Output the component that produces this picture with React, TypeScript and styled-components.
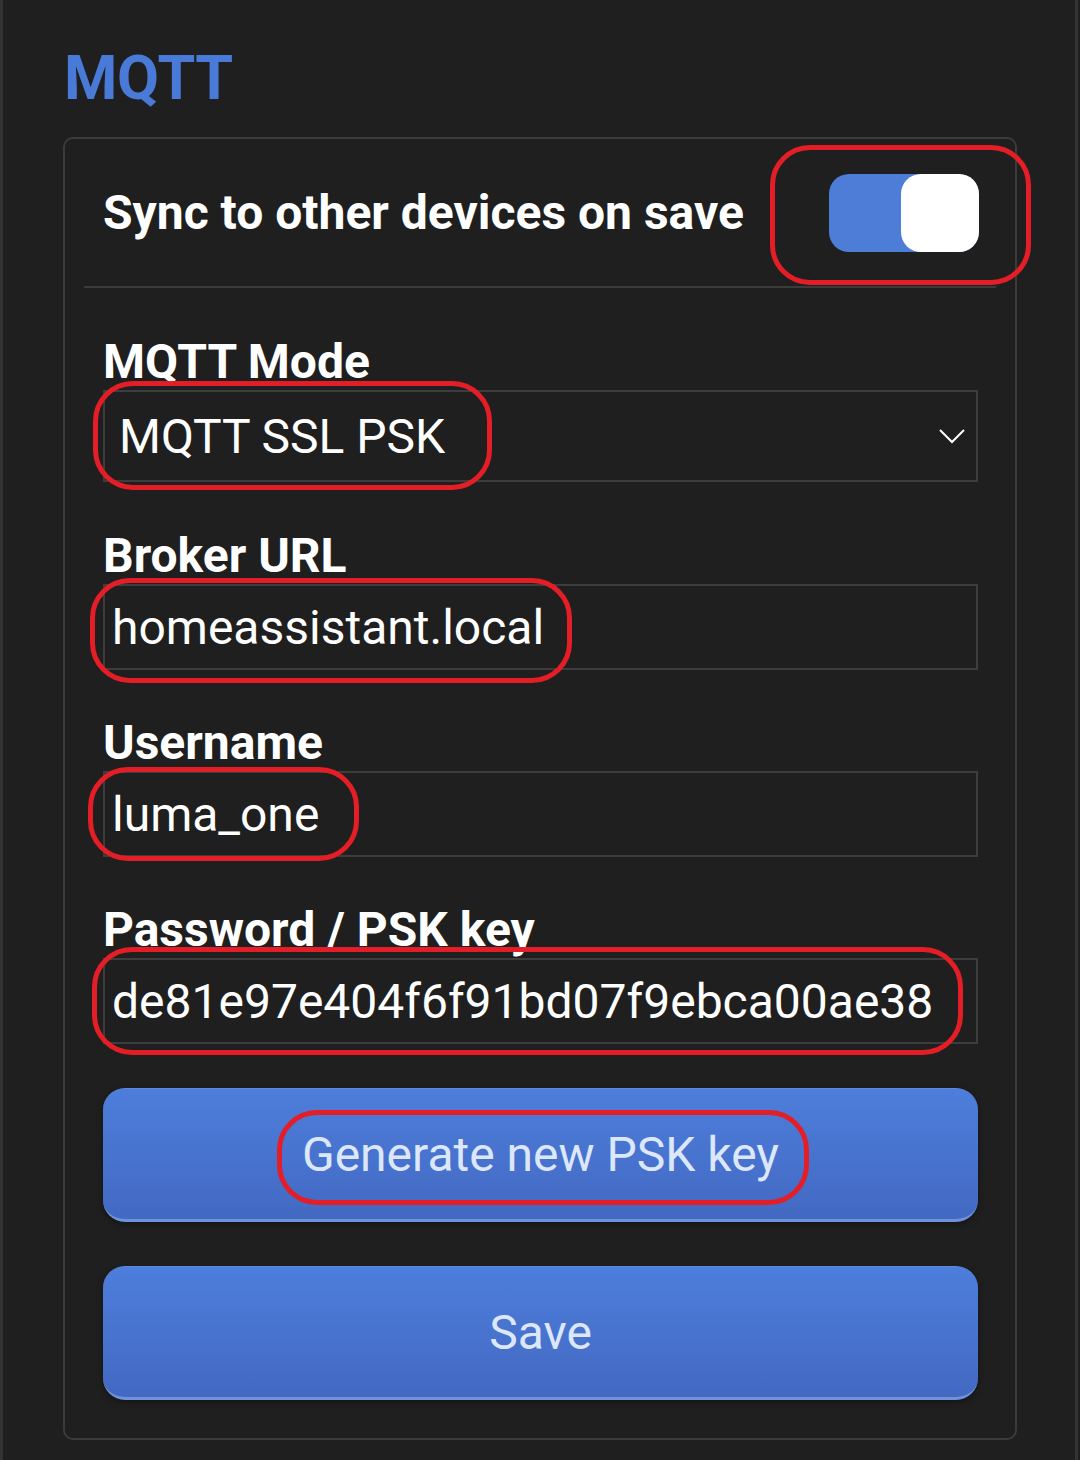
import { createGlobalStyle } from "styled-components";
import styled from "styled-components";

const GlobalStyle = createGlobalStyle`
    html, body {
        margin: 0;
        padding: 0;
        background-color: #1f1f1f;
    }

    body {
        font-family: Roboto, "Liberation Sans", sans-serif;
        color: #ffffff;
    }

    * {
        box-sizing: border-box;
    }
`

const Page = styled.div`
    position: relative;
    width: 1078px;
    min-height: 1460px;
    padding: 40px 58px 20px 60px;
    border-left: 3px solid #333333;
    border-right: 3px solid #333333;
    background-color: #1f1f1f;
`

const Heading = styled.h1`
    margin: 0 0 0 1px;
    font-size: 61px;
    line-height: 76px;
    font-weight: 700;
    color: #4a7ad8;
    letter-spacing: -0.5px;
`

const Card = styled.div`
    margin-top: 21px;
    border: 2px solid #3b3b3b;
    border-radius: 10px;
    padding-bottom: 38px;
`

const SyncRow = styled.div`
    display: flex;
    align-items: center;
    justify-content: space-between;
    height: 149px;
    margin: 0 19px;
    padding: 0 17px 0 19px;
    border-bottom: 2px solid #3b3b3b;
`

const SyncLabel = styled.span`
    font-size: 48px;
    font-weight: 700;
`

const Toggle = styled.div<{ $on: boolean }>`
    display: flex;
    justify-content: ${p => p.$on ? 'flex-end' : 'flex-start'};
    width: 150px;
    height: 78px;
    border-radius: 20px;
    background-color: ${p => p.$on ? '#4e7dd8' : '#555555'};

    div {
        width: 78px;
        height: 78px;
        border-radius: 20px;
        background-color: #ffffff;
    }
`

const Form = styled.div`
    display: flex;
    flex-direction: column;
    padding: 49px 37px 0 38px;
`

const Field = styled.div`
    display: flex;
    flex-direction: column;
    margin-bottom: 48px;

    &:first-child {
        margin-bottom: 49px;
    }

    &:nth-last-of-type(1) {
        margin-bottom: 44px;
    }
`

const Label = styled.label`
    font-size: 48px;
    font-weight: 700;
    line-height: 50px;
    margin-bottom: 3px;
`

const Box = styled.div<{ $tall?: boolean }>`
    display: flex;
    align-items: center;
    justify-content: space-between;
    height: ${p => p.$tall ? '92px' : '86px'};
    padding: 0 10px 0 ${p => p.$tall ? '14px' : '7px'};
    border: 2px solid #3d3d3d;
    font-size: 48px;
    color: #ffffff;
    white-space: nowrap;
    overflow: hidden;
`

const Chevron = styled.svg`
    width: 28px;
    height: 16px;
`

const Button = styled.button`
    display: flex;
    align-items: center;
    justify-content: center;
    width: 100%;
    height: 134px;
    margin-bottom: 44px;
    border: none;
    border-top: 1px solid #5c88de;
    border-bottom: 3px solid #6e92dc;
    border-radius: 22px;
    background: linear-gradient(#4d7edb, #4369c2);
    box-shadow: 0 2px 6px rgba(0, 0, 0, 0.4);
    font-family: Roboto, "Liberation Sans", sans-serif;
    font-size: 48px;
    color: #dde7fb;

    &:last-child {
        margin-bottom: 0;
    }
`

// red annotation marks drawn over the screenshot
const Mark = styled.div<{ $x: number, $y: number, $w: number, $h: number }>`
    position: absolute;
    left: ${p => p.$x - 3}px;
    top: ${p => p.$y}px;
    width: ${p => p.$w}px;
    height: ${p => p.$h}px;
    border: 5px solid #e41e26;
    border-radius: 40px;
    pointer-events: none;
`

const marks = [
    { x: 770, y: 145, w: 261, h: 140 },
    { x: 93, y: 381, w: 399, h: 109 },
    { x: 90, y: 578, w: 482, h: 105 },
    { x: 88, y: 767, w: 271, h: 94 },
    { x: 92, y: 947, w: 871, h: 108 },
    { x: 277, y: 1110, w: 532, h: 95 },
]

const App = () => {
    return (
        <>
            <GlobalStyle />
            <Page>
                <Heading>MQTT</Heading>
                <Card>
                    <SyncRow>
                        <SyncLabel>Sync to other devices on save</SyncLabel>
                        <Toggle $on={true}><div /></Toggle>
                    </SyncRow>
                    <Form>
                        <Field>
                            <Label>MQTT Mode</Label>
                            <Box $tall>
                                <span>MQTT SSL PSK</span>
                                <Chevron viewBox="0 0 28 16">
                                    <path d="M2 2 L14 14 L26 2" fill="none" stroke="#ffffff" strokeWidth="2" />
                                </Chevron>
                            </Box>
                        </Field>
                        <Field>
                            <Label>Broker URL</Label>
                            <Box>homeassistant.local</Box>
                        </Field>
                        <Field>
                            <Label>Username</Label>
                            <Box>luma_one</Box>
                        </Field>
                        <Field>
                            <Label>Password / PSK key</Label>
                            <Box>de81e97e404f6f91bd07f9ebca00ae38</Box>
                        </Field>
                        <Button>Generate new PSK key</Button>
                        <Button>Save</Button>
                    </Form>
                </Card>
                {marks.map((m, i) => (
                    <Mark key={i} $x={m.x} $y={m.y} $w={m.w} $h={m.h} />
                ))}
            </Page>
        </>
    )
}

export default App;
